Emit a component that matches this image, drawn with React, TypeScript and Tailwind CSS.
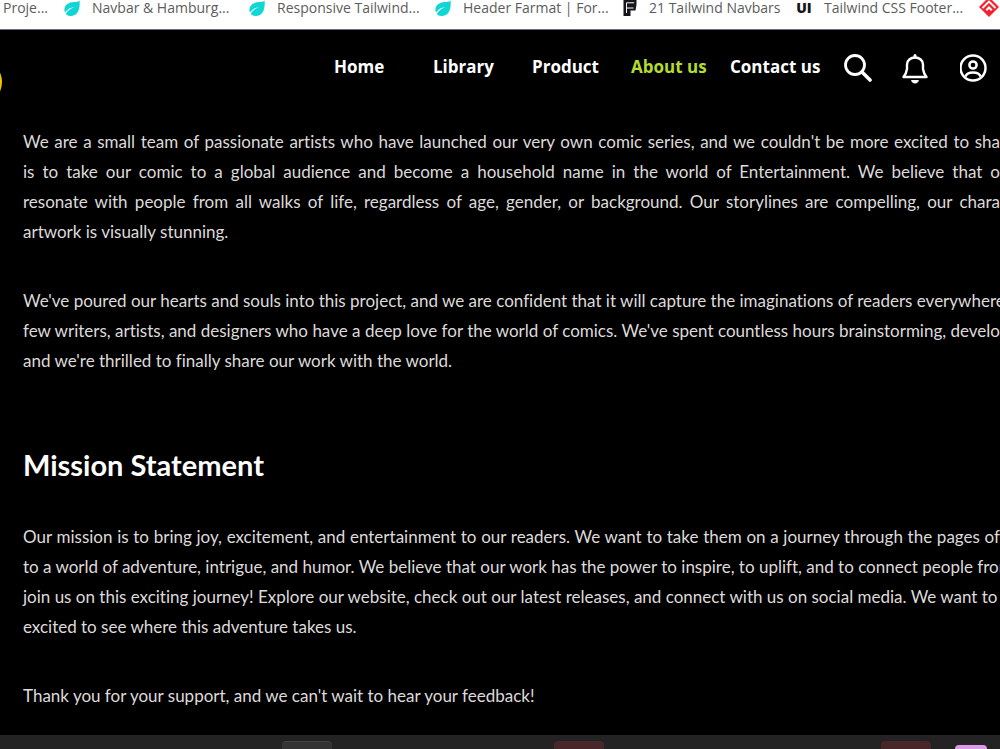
import type { ReactNode } from "react";

function Leaf() {
  return (
    <svg className="size-4 shrink-0" viewBox="0 0 16 16" aria-hidden="true">
      <path
        d="M15.6 0.4C14 2 12.4 1.8 10 2 5 2.3 0.6 4.6 0.4 9.6c0 1.4.3 2.2.7 3C3.2 9.400 6 7.600 10.400 7 6.600 8.400 3.800 10.400 1.800 13.800 3.200 15.600 5 16.200 7.600 15.900 13 15.400 16.400 10.600 15.600 0.400Z"
        fill="#12d6d6"
      />
    </svg>
  );
}

function BlockF() {
  return (
    <svg className="size-4 shrink-0" viewBox="0 0 16 16" aria-hidden="true">
      <path d="M2.500 0H15.500V4.500L14.500 10.500H9.500V16H2.500Z" fill="#15151b" />
      <path d="M5.500 13V2.800H13.200M5.500 8H12.500" fill="none" stroke="#fff" strokeWidth="1" />
    </svg>
  );
}

function RedDiamond() {
  return (
    <svg className="size-5 shrink-0" viewBox="0 0 20 20" aria-hidden="true">
      <path d="M10 -3L20 7 10 17 0 7Z" fill="#f5222d" />
      <path d="M3.500 8L10 1.500l6.500 6.500" fill="none" stroke="#fff" strokeWidth="1.800" />
      <path d="M10 6L13.500 9.500l-1.500 1.500L10 9 8 11 6.500 9.500Z" fill="#fff" />
    </svg>
  );
}

const bookmarks: { icon: ReactNode; label: string; width: string }[] = [
  { icon: <Leaf />, label: "Navbar & Hamburg...", width: "w-[141px]" },
  { icon: <Leaf />, label: "Responsive Tailwind...", width: "w-[142px]" },
  { icon: <Leaf />, label: "Header Farmat | For...", width: "w-[142px]" },
  { icon: <BlockF />, label: "21 Tailwind Navbars", width: "w-[131px]" },
  {
    icon: <span className="w-4 shrink-0 text-center font-extrabold text-[#15151b]">UI</span>,
    label: "Tailwind CSS Footer...",
    width: "w-[139px]",
  },
];

function BookmarksBar() {
  return (
    <div className="flex h-[30px] items-start gap-4 overflow-hidden border-b border-gray-500 bg-white pl-[3px] font-['Open_Sans',sans-serif] text-sm leading-4 text-[#5c5c5c]">
      <a href="#" className="w-[45px] shrink-0 whitespace-nowrap">Proje...</a>
      {bookmarks.map((b) => (
        <a key={b.label} href="#" className="flex shrink-0 gap-3 whitespace-nowrap">
          {b.icon}
          <span className={b.width}>{b.label}</span>
        </a>
      ))}
      <a href="#" aria-label="Bookmark"><RedDiamond /></a>
    </div>
  );
}

const links = ["Home", "Library", "Product", "About us", "Contact us"];

function Navbar() {
  return (
    <header className="flex h-[75px] items-center pr-3">
      <div className="mt-7 -ml-10 h-11 w-[42px] shrink-0 rounded-[50%] bg-[#f5c400]" />
      <nav className="ml-auto flex pb-0.5 font-['Open_Sans',sans-serif] text-[17px] leading-6 font-bold">
        {links.map((link) => (
          <a
            key={link}
            href="#"
            className={`w-[99px] whitespace-nowrap ${link === "About us" ? "text-[#b5dc2b]" : "text-white"}`}
          >
            {link}
          </a>
        ))}
      </nav>
      <div className="ml-[15px] flex gap-[30px] text-white">
        <button type="button" aria-label="Search">
          <svg className="size-7" viewBox="0 0 28 28" fill="none" stroke="currentColor">
            <circle cx="11" cy="11" r="9.500" strokeWidth="2.800" />
            <path d="M18 18l8 8" strokeWidth="3.600" strokeLinecap="round" />
          </svg>
        </button>
        <button type="button" aria-label="Notifications">
          <svg className="size-7 overflow-visible" viewBox="0 0 28 28" fill="none" stroke="currentColor">
            <path
              d="M1.500 23H24.500C22.500 20.500 21.500 18.500 21 15V10.500C21 6.500 17.500 3.500 13 3.500S5 6.500 5 10.500V15C4.500 18.500 3.500 20.500 1.500 23Z"
              strokeWidth="2.400"
              strokeLinejoin="round"
            />
            <path d="M13 3V1.500" strokeWidth="3" strokeLinecap="round" />
            <path d="M9 26H17C16.500 28 15 29.500 13 29.500S9.500 28 9 26Z" fill="currentColor" stroke="none" />
          </svg>
        </button>
        <button type="button" aria-label="Account">
          <svg className="size-7" viewBox="0 0 28 28" fill="none" stroke="currentColor" strokeWidth="2.500">
            <circle cx="13" cy="14" r="12.500" />
            <circle cx="13" cy="11" r="3.600" />
            <path d="M5.500 22.500C6.500 19.500 9 18.500 13 18.500S19.500 19.500 20.500 22.500" />
          </svg>
        </button>
      </div>
    </header>
  );
}

// Full lines stretch across the column, the last one keeps its own width
function Paragraph({ lines, last }: { lines: string[]; last?: string }) {
  return (
    <p className="whitespace-nowrap text-[17px] leading-[30px] text-[#dedada]">
      {lines.map((line) => (
        <span key={line} className="block text-justify [text-align-last:justify]">
          {line}
        </span>
      ))}
      {last && <span className="block">{last}</span>}
    </p>
  );
}

export default function App() {
  return (
    <div className="flex min-h-screen flex-col overflow-hidden bg-black">
      <BookmarksBar />
      <Navbar />
      <main className="flex grow flex-col gap-[39px] overflow-hidden pt-[22px] pb-6 pl-[23px] font-[Lato,sans-serif] [font-variant-ligatures:none]">
        <Paragraph
          lines={[
            "We are a small team of passionate artists who have launched our very own comic series, and we couldn't be more excited to sha",
            "is to take our comic to a global audience and become a household name in the world of Entertainment. We believe that o",
            "resonate with people from all walks of life, regardless of age, gender, or background. Our storylines are compelling, our chara",
          ]}
          last="artwork is visually stunning."
        />
        <Paragraph
          lines={[
            "We've poured our hearts and souls into this project, and we are confident that it will capture the imaginations of readers everywhere",
            "few writers, artists, and designers who have a deep love for the world of comics. We've spent countless hours brainstorming, develo",
          ]}
          last="and we're thrilled to finally share our work with the world."
        />
        <h2 className="mt-8 text-[29px] leading-9 font-bold text-white">Mission Statement</h2>
        <Paragraph
          lines={[
            "Our mission is to bring joy, excitement, and entertainment to our readers. We want to take them on a journey through the pages of",
            "to a world of adventure, intrigue, and humor. We believe that our work has the power to inspire, to uplift, and to connect people from",
            "join us on this exciting journey! Explore our website, check out our latest releases, and connect with us on social media. We want to h",
          ]}
          last="excited to see where this adventure takes us."
        />
        <Paragraph lines={[]} last="Thank you for your support, and we can't wait to hear your feedback!" />
      </main>
      <footer className="flex h-3.5 items-end overflow-hidden bg-[#232323]">
        <div className="ml-[282px] h-2 w-[50px] shrink-0 rounded-t border-t border-[#444] bg-[#333]" />
        <div className="ml-[222px] h-2 w-[50px] shrink-0 rounded-t bg-[#472729]" />
        <div className="ml-[277px] h-2 w-[50px] shrink-0 rounded-t bg-[#472729]" />
        <div className="ml-6 h-1 w-8 shrink-0 rounded-t-full bg-[#dc9be8]" />
      </footer>
    </div>
  );
}
